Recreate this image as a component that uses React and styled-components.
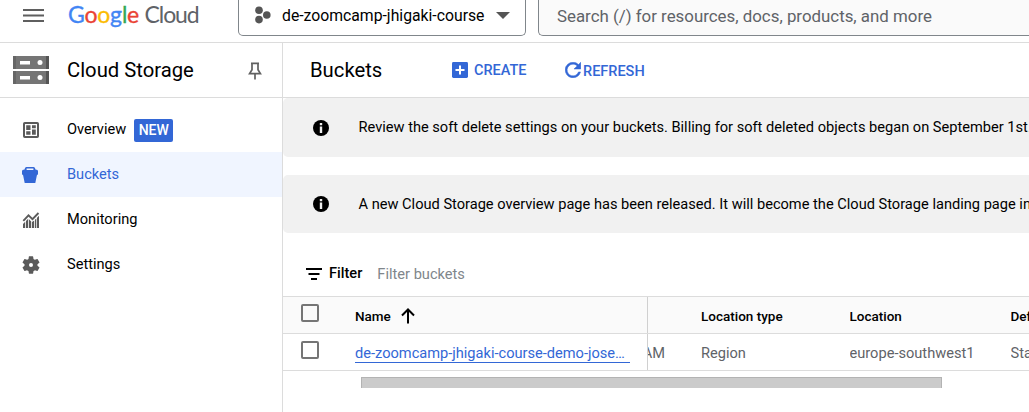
import React from "react";
import styled, { createGlobalStyle } from "styled-components";

const Global = createGlobalStyle`
  *, *::before, *::after { box-sizing: border-box; }
  body { margin: 0; background: #fff; overflow: hidden; }
`;

const Page = styled.div`
  width: 100%;
  height: 412px;
  overflow: hidden;
  display: flex;
  flex-direction: column;
  font-family: Roboto, "Liberation Sans", sans-serif;
  font-size: 14.625px;
  color: #000;
  white-space: nowrap;
  svg { display: block; flex: none; }
`;

const Label = styled.span`
  display: block;
  flex: none;
  font-size: ${(p) => p.$size || 14.625}px;
  font-weight: ${(p) => p.$weight || 400};
  color: ${(p) => p.$color || "inherit"};
  line-height: 20px;
`;

const TopBar = styled.header`
  height: 43px;
  flex: none;
  display: flex;
  align-items: flex-start;
  border-bottom: 1px solid #dcdcdc;
`;

const MenuButton = styled.div`
  width: 45px;
  padding: 9px 0 0 23px;
`;

const Logo = styled.div`
  width: 193px;
  padding: 1px 0 0 23px;
  display: flex;
  gap: 5.500px;
  font-family: Lato, sans-serif;
  line-height: 27px;
  font-size: 23px;
`;

const Brand = styled.span`
  letter-spacing: ${(p) => p.$track}px;
  -webkit-text-stroke: ${(p) => p.$stroke}px;
  color: #5f6368;
`;

const Tint = styled.span`
  color: ${(p) => p.$color};
`;

const ProjectPicker = styled.div`
  width: 288px;
  height: 36px;
  display: flex;
  align-items: flex-start;
  padding: 6px 13px 0 16px;
  border: 1px solid #80868b;
  border-top: 0;
  border-radius: 0 0 5px 5px;
  svg:last-child { margin: 6px 2px 0 auto; }
  ${Label} { margin-left: 11px; }
`;

const SearchBox = styled.div`
  flex: 1;
  min-width: 0;
  height: 36px;
  margin-left: 12px;
  padding: 6px 0 0 18px;
  background: #fafafa;
  border: 1px solid #80868b;
  border-top: 0;
  border-right: 0;
  border-radius: 0 0 0 5px;
`;

const Body = styled.div`
  flex: 1;
  min-height: 0;
  display: flex;
`;

const Sidebar = styled.aside`
  width: 283px;
  flex: none;
  border-right: 1px solid #dcdcdc;
`;

const SideHeader = styled.div`
  height: 55px;
  display: flex;
  align-items: center;
  padding: 0 20px 0 13px;
  border-bottom: 1px solid #dcdcdc;
  ${Label} { margin-left: 18px; flex: 1; }
  svg:last-child { margin-top: 2px; }
`;

const Nav = styled.nav`
  padding-top: 9px;
`;

const NavItem = styled.div`
  height: 45px;
  display: flex;
  align-items: center;
  padding: 0 0 1px 21px;
  gap: 26px;
  color: ${(p) => (p.$active ? "#3367d6" : "#000")};
  background: ${(p) => (p.$active ? "#f0f5ff" : "transparent")};
  svg { margin-top: 2px; }
`;

const Badge = styled.span`
  height: 23px;
  width: 39px;
  margin: 2px 0 0 -18px;
  border-radius: 2px;
  background: #3367d6;
  color: #fff;
  font-size: 14px;
  font-weight: 500;
  line-height: 23px;
  text-align: center;
`;

const Main = styled.main`
  flex: 1;
  min-width: 0;
  overflow: hidden;
`;

const Toolbar = styled.div`
  height: 55px;
  display: flex;
  align-items: center;
  padding-left: 27px;
  border-bottom: 1px solid #dcdcdc;
`;

const ToolbarTitle = styled.div`
  width: 142px;
`;

const Action = styled.div`
  display: flex;
  align-items: center;
  gap: ${(p) => p.$gap}px;
  width: 113px;
  color: #3367d6;
  ${Label} { padding-top: ${(p) => p.$drop || 0}px; }
`;

const Banner = styled.div`
  height: ${(p) => p.$height}px;
  margin-bottom: 18px;
  display: flex;
  align-items: center;
  gap: 29.500px;
  padding-left: 30px;
  background: #f1f1f1;
  border-radius: 5px 0 0 5px;
  overflow: hidden;
  ${Label} { margin-top: ${(p) => p.$shift}px; }
  svg { margin-top: ${(p) => p.$iconShift}px; }
`;

const FilterBar = styled.div`
  height: 45px;
  display: flex;
  align-items: center;
  padding: 0 0 1px 23px;
  svg { margin: 1px 7px 0 0; }
  ${Label} + ${Label} { margin: 2px 0 0 15px; }
`;

const Table = styled.div`
  border-top: 1px solid #dcdcdc;
`;

const Row = styled.div`
  height: 37px;
  display: flex;
  border-bottom: 1px solid #dcdcdc;
  background: ${(p) => (p.$head ? "#fafafa" : "#fff")};
  color: ${(p) => (p.$head ? "#000" : "#5f6368")};
`;

const NameCell = styled.div`
  width: 365px;
  flex: none;
  display: flex;
  align-items: center;
  padding-left: 18px;
  border-right: 1px solid #d0d0d0;
`;

const Cell = styled.div`
  width: ${(p) => p.$width}px;
  flex: none;
  display: flex;
  align-items: center;
  padding-top: 2px;
  overflow: hidden;
`;

const HeadCell = styled(Cell)`
  padding-top: 1px;
`;

const TimeCell = styled(Cell)`
  justify-content: flex-end;
  padding-right: 36px;
`;

const Checkbox = styled.span`
  width: 18px;
  height: 18px;
  margin: 0 36px 4px 0;
  border: 2px solid #757575;
  border-radius: 2px;
`;

const SortHead = styled.div`
  display: flex;
  align-items: center;
  gap: 10px;
  padding-top: 1px;
`;

const BucketLink = styled.a`
  width: 275px;
  height: 19px;
  margin-top: 2px;
  line-height: 19px;
  color: #3367d6;
  border-bottom: 1px solid #3367d6;
`;

const ScrollThumb = styled.div`
  width: 581px;
  height: 11px;
  margin: 6px 0 0 78px;
  background: #cbcbcb;
  border: 1px solid #b3b3b3;
  border-bottom: 0;
`;

const MenuIcon = () => (
  <svg width="21" height="14" fill="#5f5f5f">
    <path d="M0 0h21v2H0zM0 5.5h21v2H0zM0 11h21v2H0z" />
  </svg>
);

const ProjectIcon = () => (
  <svg width="16" height="18" fill="#555">
    <circle cx="4" cy="4.3" r="3.8" />
    <circle cx="11.8" cy="9" r="3.8" />
    <circle cx="4" cy="13.6" r="3.8" />
  </svg>
);

const CaretIcon = () => (
  <svg width="14" height="7" fill="#555">
    <path d="M0 0h14L7 7z" />
  </svg>
);

const ServerIcon = () => (
  <svg width="36" height="28">
    {[0, 15].map((y) => (
      <g key={y} transform={`translate(0 ${y})`}>
        <path fill="#757575" d="M0 0h36v13H0z" />
        <path fill="#666" d="M0 0h3v13H0z" />
        <path fill="#555" d="M33 0h3v13h-3z" />
        <path fill="#fff" d="M7 5h10v3.500H7z" />
        <circle cx="27" cy="6.600" r="2.500" fill="#fff" />
      </g>
    ))}
  </svg>
);

const PinIcon = () => (
  <svg width="14" height="18" fill="none" stroke="#616161" strokeWidth="1.7">
    <path d="M3 1.3h8M4 1.3v6.5L1.6 11.6h10.8L10 7.8V1.3M7 11.6V17.4" />
  </svg>
);

const CreateIcon = () => (
  <svg width="16" height="16">
    <rect width="16" height="16" rx="1.4" fill="#3367d6" />
    <path d="M7 3.5h2V7h3.5v2H9v3.5H7V9H3.5V7H7z" fill="#fff" />
  </svg>
);

const RefreshIcon = () => (
  <svg width="16" height="16" viewBox="3.800 3.800 16.400 16.400" fill="#3367d6" stroke="#3367d6" strokeWidth="0.5">
    <path d="M17.65 6.35A7.96 7.96 0 0 0 12 4a8 8 0 1 0 7.73 10h-2.08A6 6 0 1 1 12 6c1.66 0 3.14.69 4.22 1.78L13 11h7V4l-2.35 2.35z" />
  </svg>
);

const OverviewIcon = () => (
  <svg width="20" height="20" viewBox="0 0 20 20">
    <rect x="3" y="3" width="14" height="14" rx="0.8" fill="none" stroke="#5a5a5a" strokeWidth="2" />
    <path fill="#5a5a5a" d="M5.200 5.200h4.300v4.800H5.200zM5.200 11.300h4.300v3.500H5.200zM11 5.200h3.800v3H11zM11 9.500h3.800v5.300H11z" />
  </svg>
);

const BucketIcon = () => (
  <svg width="20" height="20" viewBox="0 0 20 20" fill="#3367d6">
    <path
      fillRule="evenodd"
      d="M5.500 2h7q1 0 1.400.9l.8 1.900H16l1 1v3.500l-1.100.9L14.300 18H3.700L2.100 10.200 1 9.300V5.800l1-1h1.300l.8-1.900Q4.500 2 5.500 2zM5.600 3.400v1.700h6.800V3.400z"
    />
  </svg>
);

const MonitoringIcon = () => (
  <svg width="20" height="20" viewBox="0 0 20 20">
    <path fill="none" stroke="#5a5a5a" strokeWidth="1.900" d="M2.300 10.800 7.500 5.300l4 3.800L17.500 3" />
    <path fill="#5a5a5a" d="M2 14l2.200-2.200V18H2zM5 11l2.200-2.200V18H5zM8 9.300l2.200 2.200V18H8zM11 12l2.200-1.500V18H11zM14 9.800l1.300-1.300V18H14zM16 7.800l2-2V18h-2z" />
  </svg>
);

const SettingsIcon = () => (
  <svg width="20" height="20" viewBox="0.500 0.500 23 23" fill="#5a5a5a">
    <path d="M19.430 12.980c.04-.32.07-.64.07-.98s-.03-.66-.07-.98l2.110-1.650c.19-.15.24-.42.12-.64l-2-3.460c-.12-.22-.39-.3-.61-.22l-2.490 1c-.52-.4-1.080-.73-1.690-.98l-.38-2.650A.49.49 0 0 0 14 2h-4c-.25 0-.46.18-.49.42l-.38 2.650c-.61.25-1.170.59-1.690.98l-2.490-1c-.23-.09-.49 0-.61.22l-2 3.460c-.13.22-.07.49.12.64l2.110 1.650c-.04.32-.07.65-.07.98s.03.66.07.98l-2.110 1.650c-.19.15-.24.42-.12.64l2 3.460c.12.22.39.3.61.22l2.490-1c.52.4 1.080.73 1.690.98l.38 2.650c.03.24.24.42.49.42h4c.25 0 .46-.18.49-.42l.38-2.650c.61-.25 1.170-.59 1.690-.98l2.490 1c.23.09.49 0 .61-.22l2-3.460c.12-.22.07-.49-.12-.64l-2.110-1.650zM12 14.300a2.300 2.300 0 1 1 0-4.600 2.300 2.300 0 0 1 0 4.600z" />
  </svg>
);

const InfoIcon = () => (
  <svg width="16" height="16">
    <circle cx="8" cy="8" r="8" fill="#000" />
    <path d="M6.800 3h2.400v2.300H6.800zM6.800 6.500h2.400V13H6.800z" fill="#f1f1f1" />
  </svg>
);

const FilterIcon = () => (
  <svg width="16" height="12" fill="#000">
    <path d="M0 0h16v2H0zM2.500 5h11v2h-11zM5 10h6v2H5z" />
  </svg>
);

const SortIcon = () => (
  <svg width="14" height="16" fill="none" stroke="#000" strokeWidth="2">
    <path d="M7 15.500V2M1 7.500l6-6 6 6" />
  </svg>
);

export default function App() {
  return (
    <Page>
      <Global />
      <TopBar>
        <MenuButton><MenuIcon /></MenuButton>
        <Logo>
          <Brand $track={-0.2} $stroke={0.35}>
            <Tint $color="#4285f4">G</Tint>
            <Tint $color="#ea4335">o</Tint>
            <Tint $color="#fbbc04">o</Tint>
            <Tint $color="#4285f4">g</Tint>
            <Tint $color="#34a853">l</Tint>
            <Tint $color="#ea4335">e</Tint>
          </Brand>
          <Brand $track={-1.100} $stroke={0}>Cloud</Brand>
        </Logo>
        <ProjectPicker>
          <ProjectIcon />
          <Label $size={15.75}>de-zoomcamp-jhigaki-course</Label>
          <CaretIcon />
        </ProjectPicker>
        <SearchBox>
          <Label $size={16.875} $color="#5f6368">Search (/) for resources, docs, products, and more</Label>
        </SearchBox>
      </TopBar>
      <Body>
        <Sidebar>
          <SideHeader>
            <ServerIcon />
            <Label $size={20.25}>Cloud Storage</Label>
            <PinIcon />
          </SideHeader>
          <Nav>
            <NavItem>
              <OverviewIcon />
              <Label>Overview</Label>
              <Badge>NEW</Badge>
            </NavItem>
            <NavItem $active>
              <BucketIcon />
              <Label>Buckets</Label>
            </NavItem>
            <NavItem>
              <MonitoringIcon />
              <Label>Monitoring</Label>
            </NavItem>
            <NavItem>
              <SettingsIcon />
              <Label>Settings</Label>
            </NavItem>
          </Nav>
        </Sidebar>
        <Main>
          <Toolbar>
            <ToolbarTitle><Label $size={20.25}>Buckets</Label></ToolbarTitle>
            <Action $gap={6} $drop={1}>
              <CreateIcon />
              <Label $size={14.500} $weight={500}>CREATE</Label>
            </Action>
            <Action $gap={2} $drop={3}>
              <RefreshIcon />
              <Label $size={14.500} $weight={500}>REFRESH</Label>
            </Action>
          </Toolbar>
          <Banner $height={59} $shift={-1} $iconShift={1}>
            <InfoIcon />
            <Label>Review the soft delete settings on your buckets. Billing for soft deleted objects began on September 1st.</Label>
          </Banner>
          <Banner $height={58} $shift={0} $iconShift={0}>
            <InfoIcon />
            <Label>A new Cloud Storage overview page has been released. It will become the Cloud Storage landing page in</Label>
          </Banner>
          <FilterBar>
            <FilterIcon />
            <Label $weight={500}>Filter</Label>
            <Label $color="#80868b">Filter buckets</Label>
          </FilterBar>
          <Table>
            <Row $head>
              <NameCell>
                <Checkbox />
                <SortHead>
                  <Label $size={13.500} $weight={500}>Name</Label>
                  <SortIcon />
                </SortHead>
              </NameCell>
              <HeadCell $width={53} />
              <HeadCell $width={148.500}><Label $size={13.500} $weight={500}>Location type</Label></HeadCell>
              <HeadCell $width={161}><Label $size={13.500} $weight={500}>Location</Label></HeadCell>
              <HeadCell $width={160}><Label $size={13.500} $weight={500}>Default storage class</Label></HeadCell>
            </Row>
            <Row>
              <NameCell>
                <Checkbox />
                <BucketLink>de-zoomcamp-jhigaki-course-demo-jose…</BucketLink>
              </NameCell>
              <TimeCell $width={53}><Label>AM</Label></TimeCell>
              <Cell $width={148.500}><Label>Region</Label></Cell>
              <Cell $width={161}><Label>europe-southwest1</Label></Cell>
              <Cell $width={160}><Label>Standard</Label></Cell>
            </Row>
          </Table>
          <ScrollThumb />
        </Main>
      </Body>
    </Page>
  );
}
